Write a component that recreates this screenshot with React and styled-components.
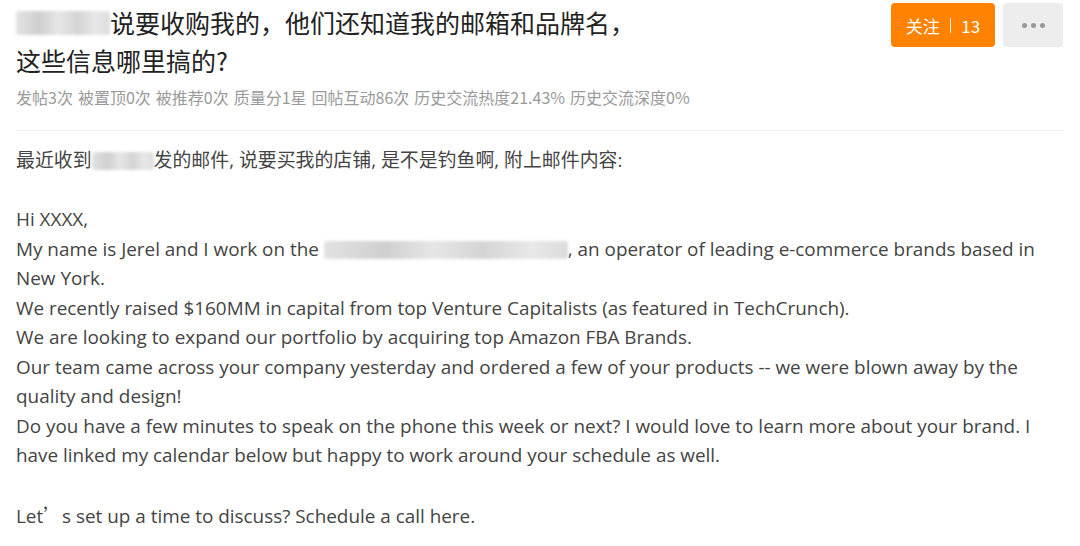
import React from 'react';
import styled, { createGlobalStyle } from 'styled-components';

const GlobalStyle = createGlobalStyle`
  html, body {
    margin: 0;
    padding: 0;
    background: #fff;
  }
  body {
    font-family: "Open Sans", "Noto Sans CJK SC", sans-serif;
    color: #333;
  }
`;

const Page = styled.main`
  width: 1080px;
  padding: 0 17px 0 16px;
  box-sizing: border-box;
`;

const Header = styled.header`
  display: flex;
  justify-content: space-between;
  align-items: flex-start;
  padding-top: 3px;
`;

const Title = styled.h1`
  margin: 0;
  max-width: 632px;
  font-size: 25px;
  font-weight: 400;
  line-height: 38px;
  color: #222;
  font-family: "Noto Sans CJK SC", "Open Sans", sans-serif;
`;

const Actions = styled.div`
  display: flex;
  gap: 8px;
`;

const FollowButton = styled.button`
  display: flex;
  align-items: center;
  justify-content: center;
  gap: 10px;
  width: 104px;
  height: 44px;
  border: none;
  border-radius: 4px;
  background: #ff8200;
  color: #fff;
  font-size: 17px;
  font-family: "Noto Sans CJK SC", "Open Sans", sans-serif;
  cursor: pointer;
`;

const Divider = styled.span`
  width: 1.5px;
  height: 15px;
  background: rgba(255, 255, 255, 0.9);
`;

const MoreButton = styled.button`
  display: flex;
  align-items: center;
  justify-content: center;
  gap: 4px;
  width: 60px;
  height: 44px;
  border: none;
  border-radius: 4px;
  background: #ededed;
  cursor: pointer;
`;

const Dot = styled.span`
  width: 5px;
  height: 5px;
  border-radius: 50%;
  background: #999;
`;

const Stats = styled.div`
  display: flex;
  gap: 5px;
  margin-top: 6px;
  font-size: 16px;
  color: #9a9a9a;
  font-family: "Noto Sans CJK SC", sans-serif;
  line-height: 24px;
`;

const Rule = styled.hr`
  margin: 21px 0 0;
  border: none;
  border-top: 1px solid #f0f0f0;
`;

const Body = styled.article`
  padding-top: 15px;
  font-size: 18.9px;
  line-height: 29.5px;
  color: #444;
`;

const Line = styled.p`
  margin: 0;
  min-height: 29.5px;
`;

const Wide = styled.span`
  font-family: "Noto Sans CJK SC", sans-serif;
`;

const Redacted = styled.span`
  display: inline-block;
  width: ${p => p.$w}px;
  height: ${p => p.$h || 18}px;
  vertical-align: ${p => p.$va || '-3px'};
  border-radius: 3px;
  background: linear-gradient(90deg, #e2e2e2 0%, #cfcfcf 25%, #e6e6e6 45%, #d4d4d4 65%, #e8e8e8 85%, #dcdcdc 100%);
  filter: blur(1.5px);
`;

const stats = ['发帖3次', '被置顶0次', '被推荐0次', '质量分1星', '回帖互动86次', '历史交流热度21.43%', '历史交流深度0%'];

const App = () => (
  <Page>
    <GlobalStyle />
    <Header>
      <div>
        <Title>
          <Redacted $w={94} $h={24} $va="-2px" />
          说要收购我的，他们还知道我的邮箱和品牌名，这些信息哪里搞的?
        </Title>
        <Stats>
          {stats.map(s => <span key={s}>{s}</span>)}
        </Stats>
      </div>
      <Actions>
        <FollowButton>
          关注<Divider />13
        </FollowButton>
        <MoreButton aria-label="更多">
          <Dot /><Dot /><Dot />
        </MoreButton>
      </Actions>
    </Header>
    <Rule />
    <Body>
      <Line>最近收到<Redacted $w={62} />发的邮件, 说要买我的店铺, 是不是钓鱼啊, 附上邮件内容:</Line>
      <Line />
      <Line>Hi XXXX,</Line>
      <Line>My name is Jerel and I work on the <Redacted $w={244} />, an operator of leading e-commerce brands based in New York.</Line>
      <Line>We recently raised $160MM in capital from top Venture Capitalists (as featured in TechCrunch).</Line>
      <Line>We are looking to expand our portfolio by acquiring top Amazon FBA Brands.</Line>
      <Line>Our team came across your company yesterday and ordered a few of your products -- we were blown away by the quality and design!</Line>
      <Line>Do you have a few minutes to speak on the phone this week or next? I would love to learn more about your brand. I have linked my calendar below but happy to work around your schedule as well.</Line>
      <Line />
      <Line>Let<Wide>’</Wide>s set up a time to discuss? Schedule a call here.</Line>
    </Body>
  </Page>
);

export default App;
